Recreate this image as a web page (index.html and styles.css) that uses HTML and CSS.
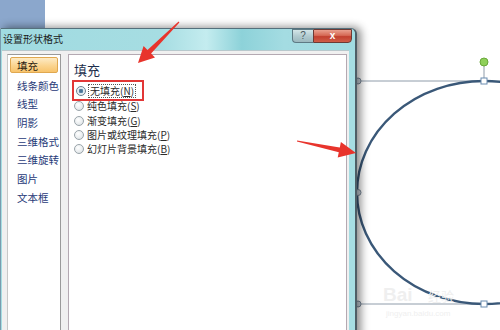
FILE: index.html
```html
<!DOCTYPE html>
<html lang="zh-CN">
<head>
<meta charset="utf-8">
<link rel="stylesheet" href="styles.css">
</head>
<body>
<div class="stage">
  <div class="slide-thumb"></div>

  <svg class="canvas" width="500" height="330" viewBox="0 0 500 330">
    <line x1="357" y1="81" x2="500" y2="81" stroke="#8f9caa" stroke-width="1"/>
    <line x1="357" y1="304" x2="500" y2="304" stroke="#8f9caa" stroke-width="1"/>
    <line x1="484" y1="62" x2="484" y2="81" stroke="#8f9caa" stroke-width="1"/>
    <ellipse cx="484" cy="192.5" rx="127" ry="111.5" fill="none" stroke="#3a5878" stroke-width="2.4"/>
    <circle cx="484" cy="62" r="4" fill="#8fd05a" stroke="#6aa83a" stroke-width="1"/>
    <rect x="481" y="78" width="6" height="6" fill="#ffffff" stroke="#6a8cb0" stroke-width="1"/>
    <rect x="481" y="301" width="6" height="6" fill="#ffffff" stroke="#6a8cb0" stroke-width="1"/>
    <circle cx="358" cy="81" r="3" fill="#c8d0d8" stroke="#7a8898" stroke-width="1"/>
    <circle cx="358" cy="304" r="3" fill="#c8d0d8" stroke="#7a8898" stroke-width="1"/>
    <circle cx="358" cy="192.5" r="3" fill="#c8d0d8" stroke="#7a8898" stroke-width="1"/>
    <text x="383" y="301" class="wm-big">Bai</text>
    <text x="428" y="301" class="wm-cjk">经验</text>
    <text x="386" y="316" class="wm-small">jingyan.baidu.com</text>
  </svg>

  <div class="dialog">
    <div class="titlebar">
      <span class="title">设置形状格式</span>
      <div class="caption-btns">
        <span class="btn-help">?</span>
        <span class="btn-close">x</span>
      </div>
    </div>
    <div class="client">
      <ul class="cat-list">
        <li class="cat active">填充</li>
        <li class="cat">线条颜色</li>
        <li class="cat">线型</li>
        <li class="cat">阴影</li>
        <li class="cat">三维格式</li>
        <li class="cat">三维旋转</li>
        <li class="cat">图片</li>
        <li class="cat">文本框</li>
      </ul>
      <div class="panel">
        <div class="panel-heading">填充</div>
        <div class="options">
          <div class="opt highlighted"><span class="radio checked"></span><span class="label focus">无填充(<u>N</u>)</span></div>
          <div class="opt"><span class="radio"></span><span class="label">纯色填充(<u>S</u>)</span></div>
          <div class="opt"><span class="radio"></span><span class="label">渐变填充(<u>G</u>)</span></div>
          <div class="opt"><span class="radio"></span><span class="label">图片或纹理填充(<u>P</u>)</span></div>
          <div class="opt"><span class="radio"></span><span class="label">幻灯片背景填充(<u>B</u>)</span></div>
        </div>
      </div>
    </div>
  </div>

  <svg class="arrows" width="500" height="330" viewBox="0 0 500 330">
    <polygon fill="#e8342c" points="178.6,21.6 147.5,49.9 143.6,46.0 138,63 155,57.4 151.1,53.5 179.4,22.4"/>
    <polygon fill="#e8342c" points="297.1,140.5 339.8,147.4 340.9,142.0 356,153 337.7,157.6 338.8,152.3 296.9,141.5"/>
  </svg>
</div>
</body>
</html>
```

FILE: styles.css
```css
* { box-sizing: border-box; }
html, body { margin: 0; padding: 0; background: #ffffff; }
body { font-family: "Noto Sans CJK SC", "Liberation Sans", sans-serif; }

.stage {
  position: relative;
  width: 500px;
  height: 330px;
  overflow: hidden;
  background: #ffffff;
}

.slide-thumb {
  position: absolute;
  left: 0;
  top: 0;
  width: 45px;
  height: 28px;
  background: #8ba7cc;
}

.canvas {
  position: absolute;
  left: 0;
  top: 0;
}
.wm-big { font-family: "Liberation Sans", sans-serif; font-size: 19px; font-weight: bold; fill: #efefef; }
.wm-cjk { font-family: "Noto Sans CJK SC", sans-serif; font-size: 13px; fill: #efefef; }
.wm-small { font-family: "Liberation Sans", sans-serif; font-size: 8px; fill: #efefef; }

.arrows {
  position: absolute;
  left: 0;
  top: 0;
  pointer-events: none;
}

/* Dialog window */
.dialog {
  position: absolute;
  left: 0;
  top: 28px;
  width: 357px;
  height: 320px;
  display: flex;
  flex-direction: column;
  background: #a6dee3;
  border: 1px solid #55707c;
  border-left-color: #7a9cae;
  border-right: 2px solid #4e5e66;
  border-radius: 0 6px 0 0;
  box-shadow: 4px -1px 8px rgba(0, 0, 0, 0.45);
}

.titlebar {
  height: 21px;
  flex: none;
  display: flex;
  align-items: flex-start;
  justify-content: space-between;
  background: linear-gradient(90deg, #a0dbe1 0%, #a6dde2 45%, #c4ecef 58%, #8dd2d9 68%, #a4dce2 80%, #a0dbe1 100%);
  border-radius: 0 5px 0 0;
}

.title {
  padding: 3px 0 0 2px;
  font-size: 10px;
  line-height: 14px;
  color: #1b1b1b;
}

.caption-btns {
  display: flex;
  margin-right: 3px;
}
.btn-help, .btn-close {
  height: 14px;
  display: flex;
  align-items: center;
  justify-content: center;
  font-family: "Liberation Sans", sans-serif;
  font-weight: bold;
  font-size: 10px;
  line-height: 1;
  border: 1px solid #5e7a84;
}
.btn-help {
  width: 21px;
  background: linear-gradient(180deg, #d4e6e8 0%, #b2cbd0 50%, #9cb8be 100%);
  color: #4a5a60;
  border-right: none;
  border-radius: 0 0 0 4px;
  font-weight: normal;
}
.btn-close {
  width: 39px;
  background: linear-gradient(180deg, #e9a08f 0%, #d66a56 45%, #c2402f 55%, #cf5d48 100%);
  color: #ffffff;
  border-color: #6d3a34;
  border-radius: 0 0 4px 0;
}

.client {
  flex: 1;
  display: flex;
  gap: 7px;
  margin: 0 6px 0 1px;
  padding: 3px 2px 0 5px;
  background: #f0f0f0;
  border-top: 1px solid #b8c8cc;
}

.cat-list {
  list-style: none;
  margin: 0;
  padding: 2px 2px 0 2px;
  width: 54px;
  flex: none;
  background: #ffffff;
  border: 1px solid #9a9a9a;
  border-left-color: #c8c8c8;
}
.cat {
  height: 18.7px;
  padding-left: 7px;
  font-size: 10.5px;
  line-height: 19px;
  color: #1f3a78;
  white-space: nowrap;
}
.cat.active {
  height: 16px;
  line-height: 15px;
  margin-bottom: 2.7px;
  color: #2a2010;
  background: linear-gradient(180deg, #fdebc6 0%, #fbd48f 55%, #f8c46c 100%);
  border: 1px solid #e0a850;
  border-radius: 2px;
  padding-left: 6px;
}

.panel {
  flex: 1;
  background: #ffffff;
  border: 1px solid #b4a9b2;
  padding: 7px 0 0 4px;
}
.panel-heading {
  font-size: 13px;
  line-height: 15px;
  color: #1d2e4c;
  padding-left: 1px;
  margin-bottom: 4px;
}
.options {
  display: flex;
  flex-direction: column;
  align-items: flex-start;
}
.opt {
  display: flex;
  align-items: center;
  gap: 3px;
  height: 14.4px;
  padding-left: 1px;
  font-size: 10px;
  color: #2b2b2b;
  white-space: nowrap;
}
.opt.highlighted {
  height: 21px;
  width: 72px;
  margin-left: -1px;
  padding-left: 2px;
  border: 2px solid #e23636;
  margin-bottom: -2px;
  margin-top: -1px;
}
.radio {
  width: 10px;
  height: 10px;
  border-radius: 50%;
  border: 1px solid #9aa4aa;
  background: radial-gradient(circle at 40% 35%, #ffffff 0%, #e8ecee 60%, #cfd6da 100%);
  flex: none;
}
.radio.checked {
  border-color: #6c8090;
  background: radial-gradient(circle at 50% 50%, #3f6a8c 0%, #5c86a8 35%, #dfe8ee 45%, #f4f6f8 100%);
}
.label {
  line-height: 12px;
}
.label.focus {
  outline: 1px dotted #555555;
  outline-offset: 0;
  padding: 0 1px;
}
.label u { text-decoration: underline; }
```
